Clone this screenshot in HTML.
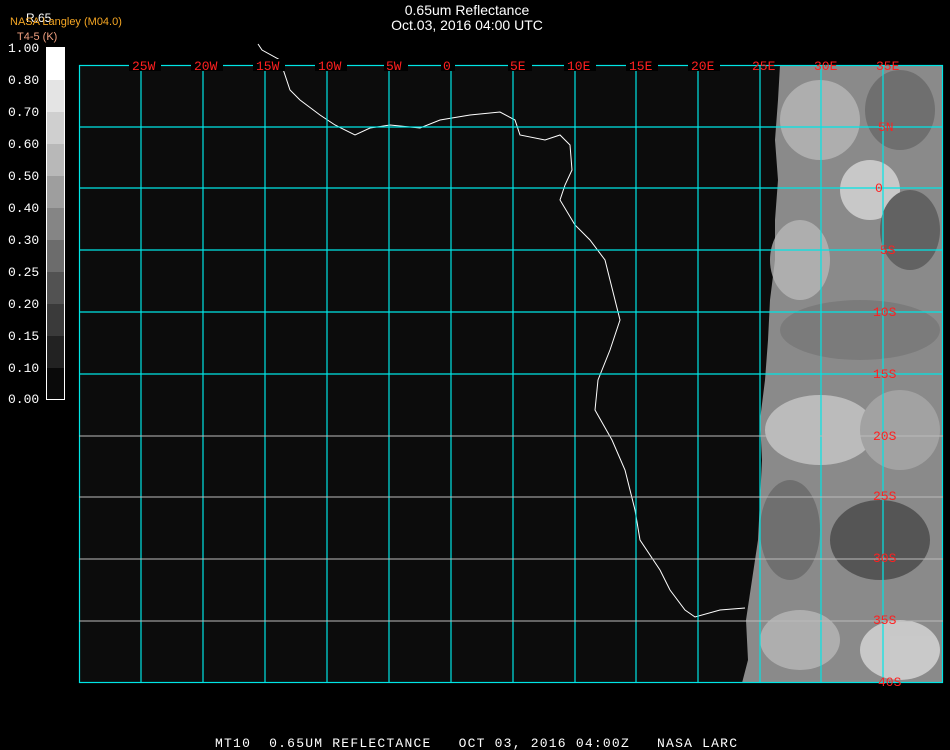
<!DOCTYPE html>
<html><head><meta charset="utf-8"><style>
html,body{margin:0;padding:0;background:#000;}
body{width:950px;height:750px;position:relative;overflow:hidden;font-family:"Liberation Mono","DejaVu Sans Mono",monospace;}
.t{position:absolute;color:#fff;font-family:"Liberation Sans",sans-serif;font-size:14px;}
</style></head><body>
<div class="t" style="left:0;width:934px;text-align:center;top:2px;">0.65um Reflectance</div>
<div class="t" style="left:0;width:934px;text-align:center;top:17px;">Oct.03, 2016 04:00 UTC</div>
<div class="t" style="left:26px;top:11px;font-size:12px;">R.65</div>
<div class="t" style="left:10px;top:16px;color:#f5a623;font-size:11px;">NASA Langley (M04.0)</div>
<div class="t" style="left:17px;top:31px;color:#f0a080;font-size:11px;">T4-5 (K)</div>
<svg width="950" height="750" style="position:absolute;left:0;top:0">
<g font-family="Liberation Mono,monospace" font-size="13" fill="#fff">
<text x="8" y="52">1.00</text><text x="8" y="84">0.80</text><text x="8" y="116">0.70</text><text x="8" y="148">0.60</text><text x="8" y="180">0.50</text><text x="8" y="212">0.40</text><text x="8" y="244">0.30</text><text x="8" y="276">0.25</text><text x="8" y="308">0.20</text><text x="8" y="340">0.15</text><text x="8" y="372">0.10</text><text x="8" y="403">0.00</text>
</g>
<g stroke="none">
<rect x="46" y="47" width="19" height="33" fill="#fff"/>
<rect x="46" y="80" width="19" height="32" fill="#e4e4e4"/>
<rect x="46" y="112" width="19" height="32" fill="#cfcfcf"/>
<rect x="46" y="144" width="19" height="32" fill="#b8b8b8"/>
<rect x="46" y="176" width="19" height="32" fill="#9e9e9e"/>
<rect x="46" y="208" width="19" height="32" fill="#858585"/>
<rect x="46" y="240" width="19" height="32" fill="#6c6c6c"/>
<rect x="46" y="272" width="19" height="32" fill="#525252"/>
<rect x="46" y="304" width="19" height="32" fill="#3a3a3a"/>
<rect x="46" y="336" width="19" height="32" fill="#222"/>
<rect x="46" y="368" width="19" height="32" fill="#0a0a0a"/>
</g>
<rect x="46.5" y="47.5" width="18" height="352" fill="none" stroke="#fff"/>
<rect x="79" y="65" width="864" height="618" fill="#0c0c0c"/>
<polygon points="780,65 943,65 943,683 742,683 748,660 746,620 752,580 758,540 760,500 762,460 760,420 765,380 768,340 770,300 775,260 775,220 778,180 775,140 778,100" fill="#8a8a8a"/>
<g opacity="0.75">
<ellipse cx="820" cy="120" rx="40" ry="40" fill="#bbb"/><ellipse cx="900" cy="110" rx="35" ry="40" fill="#666"/>
<ellipse cx="870" cy="190" rx="30" ry="30" fill="#ddd"/><ellipse cx="800" cy="260" rx="30" ry="40" fill="#bbb"/>
<ellipse cx="910" cy="230" rx="30" ry="40" fill="#555"/><ellipse cx="860" cy="330" rx="80" ry="30" fill="#777"/>
<ellipse cx="820" cy="430" rx="55" ry="35" fill="#ccc"/><ellipse cx="900" cy="430" rx="40" ry="40" fill="#aaa"/>
<ellipse cx="790" cy="530" rx="30" ry="50" fill="#666"/><ellipse cx="880" cy="540" rx="50" ry="40" fill="#444"/>
<ellipse cx="800" cy="640" rx="40" ry="30" fill="#bbb"/><ellipse cx="900" cy="650" rx="40" ry="30" fill="#ddd"/>
</g>
<polyline fill="none" stroke="#fff" stroke-width="1" points="258,44 262,50 280,60 290,90 300,100 320,115 335,125 355,135 370,128 390,125 420,128 440,120 470,115 500,112 515,120 520,135 545,140 560,135 570,145 572,170 565,185 560,200 575,225 590,240 605,260 610,280 620,320 610,350 598,380 595,410 612,440 625,470 635,510 640,540 660,570 670,590 685,610 695,617 720,610 745,608"/>
<g stroke="#00e5e5" stroke-width="1.2">
<rect x="79.5" y="65.5" width="863" height="617" fill="none"/>
<line x1="141" y1="65" x2="141" y2="683"/><line x1="203" y1="65" x2="203" y2="683"/><line x1="265" y1="65" x2="265" y2="683"/><line x1="327" y1="65" x2="327" y2="683"/><line x1="389" y1="65" x2="389" y2="683"/><line x1="451" y1="65" x2="451" y2="683"/><line x1="513" y1="65" x2="513" y2="683"/><line x1="575" y1="65" x2="575" y2="683"/><line x1="636" y1="65" x2="636" y2="683"/><line x1="698" y1="65" x2="698" y2="683"/><line x1="760" y1="65" x2="760" y2="683"/><line x1="821" y1="65" x2="821" y2="683"/><line x1="883" y1="65" x2="883" y2="683"/>
<line x1="79" y1="127" x2="943" y2="127"/><line x1="79" y1="188" x2="943" y2="188"/><line x1="79" y1="250" x2="943" y2="250"/><line x1="79" y1="312" x2="943" y2="312"/><line x1="79" y1="374" x2="943" y2="374"/>
</g>
<g stroke="#bbb" stroke-width="1">
<line x1="79" y1="436" x2="943" y2="436"/><line x1="79" y1="497" x2="943" y2="497"/><line x1="79" y1="559" x2="943" y2="559"/><line x1="79" y1="621" x2="943" y2="621"/>
</g>
<g font-family="Liberation Mono,monospace" font-size="13" fill="#ff2020">
<rect x="129" y="59" width="32" height="12" fill="#000"/><text x="132" y="70">25W</text>
<rect x="191" y="59" width="32" height="12" fill="#000"/><text x="194" y="70">20W</text>
<rect x="253" y="59" width="32" height="12" fill="#000"/><text x="256" y="70">15W</text>
<rect x="315" y="59" width="32" height="12" fill="#000"/><text x="318" y="70">10W</text>
<rect x="384" y="59" width="24" height="12" fill="#000"/><text x="386" y="70">5W</text>
<rect x="441" y="59" width="14" height="12" fill="#000"/><text x="443" y="70">0</text>
<rect x="508" y="59" width="24" height="12" fill="#000"/><text x="510" y="70">5E</text>
<rect x="564" y="59" width="32" height="12" fill="#000"/><text x="567" y="70">10E</text>
<rect x="626" y="59" width="32" height="12" fill="#000"/><text x="629" y="70">15E</text>
<rect x="688" y="59" width="32" height="12" fill="#000"/><text x="691" y="70">20E</text>
<text x="752" y="70">25E</text><text x="814" y="70">30E</text><text x="876" y="70">35E</text>
<text x="878" y="131">5N</text><text x="875" y="192">0</text><text x="880" y="254">5S</text><text x="873" y="316">10S</text><text x="873" y="378">15S</text><text x="873" y="440">20S</text><text x="873" y="500">25S</text><text x="873" y="562">30S</text><text x="873" y="624">35S</text><text x="878" y="686">40S</text>
</g>
<text x="215" y="747" font-family="Liberation Mono,monospace" font-size="13" fill="#fff" xml:space="preserve" textLength="522" lengthAdjust="spacing">MT10  0.65UM REFLECTANCE   OCT 03, 2016 04:00Z   NASA LARC</text>
</svg>
</body></html>
